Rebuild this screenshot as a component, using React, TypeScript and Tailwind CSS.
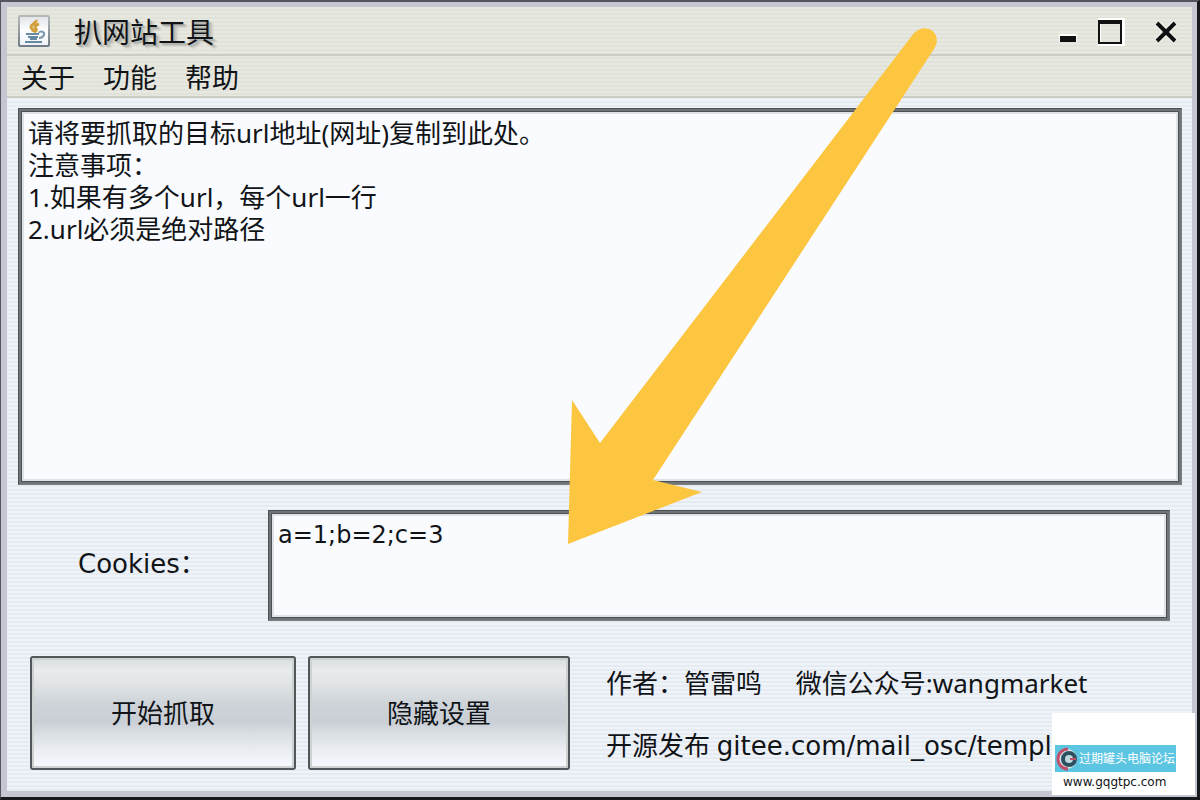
const MENUS = ["关于", "功能", "帮助"];

const FIELD =
  "block resize-none border border-t-[#4c5155] border-l-[#4c5155] border-r-[#7b7f82] border-b-[#7b7f82] bg-[#f9fbff] outline-none shadow-[inset_0_0_0_2px_#707477,inset_0_0_0_3px_#4c5155,inset_0_0_0_5px_#dfe2e6] px-[9px] py-2 leading-8";

const BUTTON =
  "h-[114px] rounded-[3px] border-2 border-[#50565a] bg-[linear-gradient(to_bottom,#d9dddd_0%,#e9ecee_12%,#dde1e4_27%,#cdd3d8_42%,#c9cfd5_58%,#d9dee2_68%,#eaedf1_84%,#f6f9ff_100%)] shadow-[inset_0_0_0_2px_#cdd1d0] text-[26px]";

const NOTICE = `请将要抓取的目标url地址(网址)复制到此处。
注意事项：
1.如果有多个url，每个url一行
2.url必须是绝对路径`;

function JavaIcon() {
  return (
    <svg width="32" height="32" viewBox="0 0 32 32" fill="none" className="shrink-0">
      <defs>
        <linearGradient id="tile" x1="0" y1="0" x2="0" y2="1">
          <stop offset="0" stopColor="#dfe3e8" />
          <stop offset="0.5" stopColor="#ffffff" />
          <stop offset="1" stopColor="#eef1f6" />
        </linearGradient>
        <linearGradient id="rim" x1="0" y1="0" x2="0" y2="1">
          <stop offset="0" stopColor="#b4b9b8" />
          <stop offset="1" stopColor="#727c88" />
        </linearGradient>
      </defs>
      <rect x="1" y="1" width="30" height="30" rx="1" fill="url(#tile)" stroke="url(#rim)" strokeWidth="2" />
      <path d="M18 5c1 3-5 4-5 7 0 2 3 2 2 5M21 9c-4 1-5 3-3 5 1 1 0 2-2 3" stroke="#d2a03a" strokeWidth="3" />
      <path d="M8 19h13M10 22h10M12 24h7M7 27h17" stroke="#6889a4" strokeWidth="2" />
      <path d="M21 18c1-3 6-1 5 2-1 2-3 3-5 3" stroke="#7d97ad" strokeWidth="2" />
    </svg>
  );
}

function TitleBar() {
  return (
    <header className="flex h-[49px] items-center border-b-2 border-[#cbccc4] pl-[11px] pr-[14px]">
      <JavaIcon />
      <h1 className="ml-6 flex-1 pt-0.5 text-[28px] leading-8 [text-shadow:2px_2px_1px_#b0b2ad,4px_3px_2px_#c2c4be]">
        扒网站工具
      </h1>
      <div className="flex items-center gap-5">
        <button aria-label="最小化">
          <svg width="20" height="32" viewBox="0 0 20 32">
            <path d="M1 19h18v8H1z" fill="#fff" />
            <path d="M2 21h16v6H2z" fill="#111" />
          </svg>
        </button>
        <button aria-label="最大化">
          <svg width="28" height="32" viewBox="0 0 28 32" fill="none">
            <path d="M1 5h24v24H1z" stroke="#fff" strokeWidth="4" />
            <path d="M1 6h22v22H1z" stroke="#111" strokeWidth="2" />
            <path d="M0 7h24" stroke="#111" strokeWidth="4" />
          </svg>
        </button>
        <button aria-label="关闭" className="ml-2">
          <svg width="24" height="32" viewBox="0 0 24 32" fill="none">
            <path d="M3 8l18 18M21 8L3 26" stroke="#fff" strokeWidth="6" />
            <path d="M3 8l18 18M21 8L3 26" stroke="#111" strokeWidth="4" />
          </svg>
        </button>
      </div>
    </header>
  );
}

function Watermark() {
  return (
    <div className="absolute right-0.5 bottom-0.5 h-[82px] w-[143px] bg-white pt-8 pl-[3px]">
      <div className="flex h-[27px] w-[121px] items-center bg-[#5cc6e2] text-[12px] leading-5 whitespace-nowrap text-white">
        <svg width="24" height="24" viewBox="0 0 24 24" fill="none" className="shrink-0">
          <circle cx="12" cy="12" r="10" fill="#d9e4eb" />
          <path d="M13 2A10 10 0 0 0 13 22" stroke="#c04f6c" strokeWidth="3" />
          <circle cx="14" cy="12" r="6" fill="#bdd9df" stroke="#2d5060" strokeWidth="4" />
          <path d="M15 12h6" stroke="#c04f6c" strokeWidth="2" />
        </svg>
        过期罐头电脑论坛
      </div>
      <p className="pl-2 font-['DejaVu_Sans'] text-[12px] leading-5">www.gqgtpc.com</p>
    </div>
  );
}

function Arrow() {
  return (
    <svg
      className="pointer-events-none absolute -top-0.5 -left-px"
      width="960"
      height="560"
      viewBox="0 0 960 560"
    >
      <path
        d="M914 33C921 26 931 27 935 34C938 39 937 44 934 49L653 480L702 492L568 544L572 400L600 443Z"
        fill="#fdc640"
      />
    </svg>
  );
}

function App() {
  return (
    <div className="relative flex min-h-screen flex-col border-t-2 border-r-3 border-b-3 border-l border-t-[#55565d] border-r-[#15191c] border-b-[#15191c] border-l-[#55565d] font-['Noto_Sans','Noto_Sans_CJK_SC',sans-serif] text-[#111417]">
      <div className="flex flex-1 flex-col border-[6px] border-t-[5px] border-r-[5px] border-[#c4c6d2] bg-[repeating-linear-gradient(to_bottom,#eff3fa_0_2px,#e6ebf2_2px_4px)]">
        <div className="bg-[repeating-linear-gradient(to_bottom,#e7e8df_0_2px,#e1e2d9_2px_4px)]">
          <TitleBar />
          <nav className="flex h-[42px] items-center gap-7 border-b-2 border-[#cbccc4] pt-1 pl-[14px] text-[27px] leading-8">
            {MENUS.map((menu) => (
              <button key={menu}>{menu}</button>
            ))}
          </nav>
        </div>

        <main className="flex flex-1 flex-col pt-[10px] pb-[21px]">
          <textarea
            aria-label="url"
            defaultValue={NOTICE}
            className={`${FIELD} mr-[10px] ml-[11px] min-h-[300px] flex-1 text-[26px]`}
          />

          <div className="mt-[25px] mr-[22px] ml-[71px] flex items-center">
            <label
              htmlFor="cookies"
              className="w-[190px] pb-1 font-['DejaVu_Sans','Noto_Sans_CJK_SC',sans-serif] text-[26px] leading-8"
            >
              Cookies：
            </label>
            <textarea
              id="cookies"
              defaultValue="a=1;b=2;c=3"
              className={`${FIELD} h-[111px] flex-1 font-['DejaVu_Sans',sans-serif] text-[24px]`}
            />
          </div>

          <div className="mt-[35px] ml-[23px] flex items-center gap-3">
            <button className={`${BUTTON} w-[266px]`}>开始抓取</button>
            <button className={`${BUTTON} w-[262px]`}>隐藏设置</button>
            <div className="ml-6 flex flex-col gap-[30px] pt-0.5 text-[26px] leading-8 whitespace-pre">
              <p>作者：管雷鸣{"     "}微信公众号:wangmarket</p>
              <p>
                开源发布{" "}
                <span className="font-['DejaVu_Sans',sans-serif]">gitee.com/mail_osc/templ</span>
              </p>
            </div>
          </div>
        </main>
      </div>
      <Watermark />
      <Arrow />
    </div>
  );
}

export default App;
